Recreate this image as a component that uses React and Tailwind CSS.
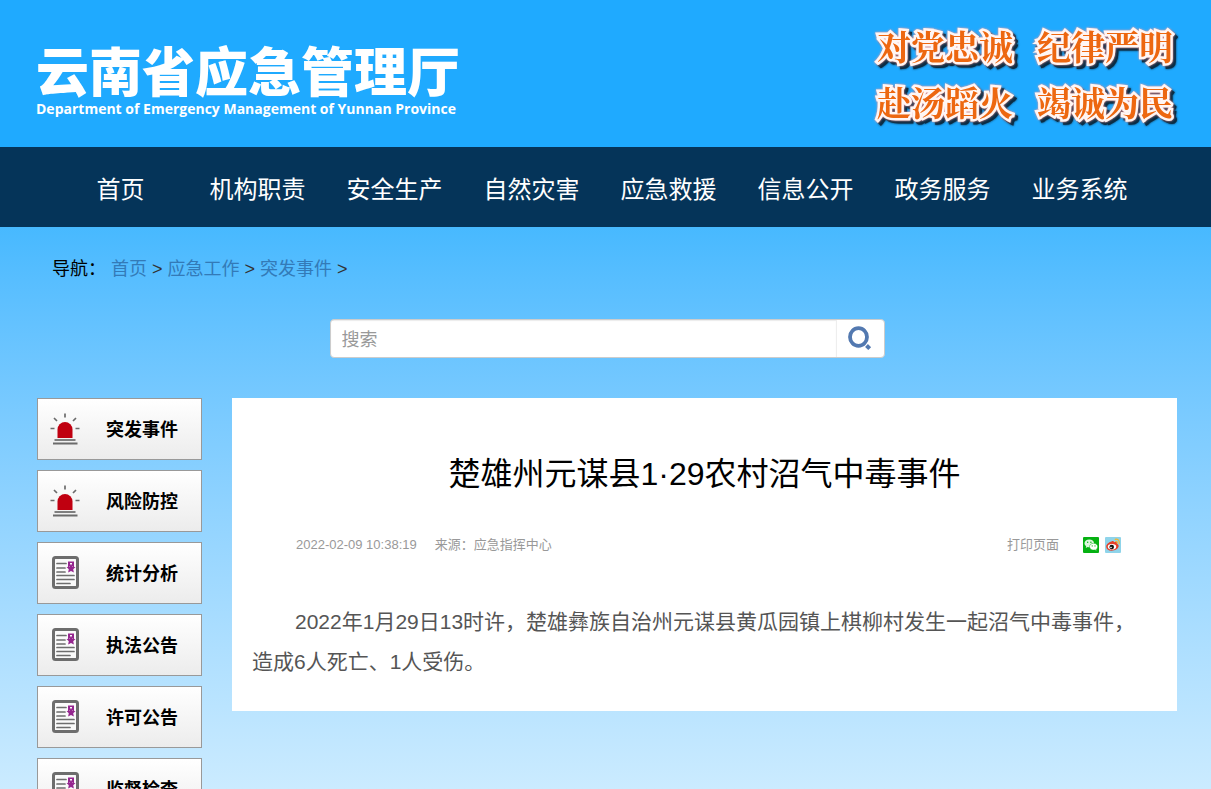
import React from "react";

const navItems = ["首页", "机构职责", "安全生产", "自然灾害", "应急救援", "信息公开", "政务服务", "业务系统"];

const crumbs = ["首页", "应急工作", "突发事件"];

const sideItems = [
  { label: "突发事件", icon: "alarm" },
  { label: "风险防控", icon: "alarm" },
  { label: "统计分析", icon: "notice" },
  { label: "执法公告", icon: "notice" },
  { label: "许可公告", icon: "notice" },
  { label: "监督检查", icon: "notice" },
];

const slogans = ["对党忠诚", "纪律严明", "赴汤蹈火", "竭诚为民"];

const AlarmIcon = () => (
  <svg width="32" height="34" viewBox="0 0 32 34" aria-hidden="true">
    <path d="M8.500 26V17.500a7.500 7.500 0 0 1 15 0V26z" fill="#c00010" />
    <g stroke="#6b6b6b" strokeWidth="1.700">
      <path d="M16 1.500v4M5 6l3 3M27 6l-3 3M1.500 16.500h4M26.500 16.500h4" />
      <path d="M5.500 28h21" />
      <path d="M4 31.500h24.500" strokeWidth="2" />
    </g>
  </svg>
);

const NoticeIcon = () => (
  <svg width="32" height="34" viewBox="0 0 32 34" aria-hidden="true">
    <rect x="4.500" y="1.500" width="24" height="30" rx="2" fill="#fafafa" stroke="#6d6d6d" strokeWidth="3" />
    <path d="M8 7.500h9M8 12h8M8 16h8M8 19.500h17M8 23.500h17M8 27.500h13" stroke="#6d6d6d" strokeWidth="1.700" strokeLinecap="round" />
    <path d="M19 5.500h6v6l-3-2-3 2z" fill="#95268f" />
    <path d="M22 8l1.300 2.800 3.200.3-2.300 2.200.7 3.200-2.900-1.600-2.900 1.600.7-3.200-2.300-2.200 3.200-.3z" fill="#95268f" />
    <path d="M21 7h2v1.500h-2z" fill="#fafafa" />
  </svg>
);

const SearchIcon = () => (
  <svg width="26" height="26" viewBox="0 0 26 26" fill="none" aria-hidden="true">
    <ellipse cx="11.500" cy="11" rx="8.500" ry="8.800" stroke="#5379b0" strokeWidth="3.800" />
    <path d="M19.500 19.500l3.200 3.200" stroke="#5379b0" strokeWidth="4" />
  </svg>
);

const WechatIcon = () => (
  <svg width="16" height="16" viewBox="0 0 16 16" aria-hidden="true">
    <rect width="16" height="16" rx="1" fill="#05b112" />
    <path d="M6.300 2.500C3.700 2.500 1.500 4.200 1.500 6.300c0 1.200.7 2.200 1.700 2.900L2.800 11l1.900-1c.5.2 1 .2 1.600.2 2.600 0 4.800-1.700 4.800-3.900S8.900 2.500 6.300 2.500z" fill="#dff7df" />
    <path d="M10.600 6.300c-2.300 0-4.100 1.500-4.100 3.400s1.800 3.400 4.100 3.400c.5 0 1-.1 1.400-.2l1.700.9-.4-1.500c.9-.6 1.400-1.500 1.400-2.600 0-1.900-1.800-3.400-4.100-3.400z" fill="#fff" stroke="#05b112" strokeWidth=".5" />
    <g fill="#05b112">
      <circle cx="4.700" cy="5.200" r=".7" />
      <circle cx="7.900" cy="5.200" r=".7" />
      <circle cx="9.200" cy="8.900" r=".6" />
      <circle cx="12" cy="8.900" r=".6" />
    </g>
  </svg>
);

const WeiboIcon = () => (
  <svg width="16" height="16" viewBox="0 0 16 16" fill="none" aria-hidden="true">
    <rect width="16" height="16" rx="1" fill="#8fd4ea" />
    <path d="M6.500 4.500c1.300-.7 2.400-.5 2.500.8 2-.7 3.500-.1 2.900 1.400 1.300.5 2 1.500 1.700 2.900-.5 2.400-3.600 4.100-7 4.100S1.200 12 1.200 9.500c0-1.900 2.400-4.200 5.300-5z" fill="#e6402a" />
    <ellipse cx="7" cy="9.800" rx="4.200" ry="2.800" fill="#fff" />
    <circle cx="6.700" cy="10" r="2.300" fill="#111" />
    <circle cx="6" cy="10.500" r=".8" fill="#fff" />
    <path d="M10.200 2.300c2.700-.6 4.700 1.400 4 4M10.600 4.500c1.200-.2 2 .6 1.700 1.700" stroke="#f5b52e" strokeWidth="1.200" strokeLinecap="round" />
  </svg>
);

const Header = () => (
  <header className="flex h-[147px] shrink-0 items-start justify-between bg-[#1faaff] pr-[34px] pl-9">
    <div className="pt-12 text-white">
      <h1 className="text-[53px] leading-[52px] font-black whitespace-nowrap">云南省应急管理厅</h1>
      <p className="font-['Open_Sans','Noto_Sans',sans-serif] text-sm leading-[18px] font-bold whitespace-nowrap">
        Department of Emergency Management of Yunnan Province
      </p>
    </div>
    <div className="grid grid-cols-2 gap-x-6 pt-[18px] pr-1 font-['Noto_Serif_CJK_SC','Noto_Sans_CJK_SC',serif] text-[34px] leading-[56px] font-bold whitespace-nowrap text-[#ed6710] [paint-order:stroke_fill] [-webkit-text-stroke:5px_#fff6f4] [filter:drop-shadow(0_0_1px_#ff9c9c)_drop-shadow(3px_3px_0_#0b2d45)]">
      {slogans.map((text) => (
        <span key={text}>{text}</span>
      ))}
    </div>
  </header>
);

const Navbar = () => (
  <nav className="h-20 shrink-0 bg-[#053459] pr-[63px] pl-[52px]">
    <ul className="grid grid-cols-8 text-center text-2xl leading-[86px] whitespace-nowrap text-white">
      {navItems.map((item) => (
        <li key={item}>
          <a href="#">{item}</a>
        </li>
      ))}
    </ul>
  </nav>
);

const Sidebar = () => (
  <aside className="flex w-[165px] shrink-0 flex-col gap-2.5">
    {sideItems.map((item) => (
      <a
        key={item.label}
        href="#"
        className="flex h-[62px] shrink-0 items-center justify-between border border-[#999] bg-linear-to-b from-white to-[#ececec] pr-[23px] pl-[11px] text-lg font-bold text-black"
      >
        {item.icon === "alarm" ? <AlarmIcon /> : <NoticeIcon />}
        <span className="pt-0.5">{item.label}</span>
      </a>
    ))}
  </aside>
);

const Article = () => (
  <article className="min-w-0 flex-1 bg-white px-5 pb-[29px]">
    <h2 className="pt-[52px] text-center text-[32px] leading-[48px] text-black">楚雄州元谋县1·29农村沼气中毒事件</h2>
    <div className="mt-[37px] flex h-5 items-center justify-between pr-9 pl-11 text-[13px] text-[#999]">
      <div className="flex gap-[18px]">
        <time>2022-02-09 10:38:19</time>
        <span>来源：应急指挥中心</span>
      </div>
      <div className="flex items-center">
        <button type="button" className="mr-6">打印页面</button>
        <a href="#" aria-label="微信" className="mr-1.5"><WechatIcon /></a>
        <a href="#" aria-label="微博"><WeiboIcon /></a>
      </div>
    </div>
    <p className="mt-[47px] pr-2 indent-[43px] text-[21px] leading-10 text-[#555]">
      2022年1月29日13时许，楚雄彝族自治州元谋县黄瓜园镇上棋柳村发生一起沼气中毒事件，造成6人死亡、1人受伤。
    </p>
  </article>
);

const App = () => {
  return (
    <div className="flex h-screen flex-col overflow-hidden bg-[#48b9ff] font-['Liberation_Sans','Noto_Sans_CJK_SC',sans-serif]">
      <Header />
      <Navbar />

      <main className="min-h-0 flex-1 bg-linear-to-b from-[#47b9ff] to-[#cbebff] pr-[34px] pl-[37px]">
        {/* Breadcrumb */}
        <div className="flex h-[92px] items-center gap-[5px] pb-2 pl-[15px] text-lg text-[#333]">
          <span className="text-black">导航：</span>
          {crumbs.map((item) => (
            <React.Fragment key={item}>
              <a href="#" className="text-[#337ab7]">{item}</a>
              <span>&gt;</span>
            </React.Fragment>
          ))}
        </div>

        {/* Search */}
        <form className="mx-auto flex h-[39px] w-[555px] overflow-hidden rounded-sm border border-[#ccc] bg-white">
          <input
            type="text"
            aria-label="搜索"
            placeholder="搜索"
            className="min-w-0 flex-1 px-[11px] pt-0.5 text-lg shadow-[inset_0_1px_1px_rgba(0,0,0,0.08)] outline-none placeholder:text-[#999]"
          />
          <button type="button" aria-label="搜索按钮" className="flex w-12 items-center justify-center border-l border-[#eee]">
            <SearchIcon />
          </button>
        </form>

        <div className="mt-10 flex items-start gap-[30px]">
          <Sidebar />
          <Article />
        </div>
      </main>
    </div>
  );
};

export default App;
